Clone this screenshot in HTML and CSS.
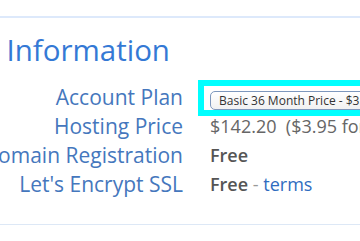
FILE: index.html
```html
<!DOCTYPE html>
<html lang="en">
<head>
    <meta charset="UTF-8">
    <title>Package Information</title>
    <link rel="stylesheet" href="styles.css">
</head>
<body>
    <div class="panel">
        <h2 class="panel-title">Package Information</h2>

        <div class="info-grid">
            <div class="info-label"><span>Account Plan</span></div>
            <div class="info-value">
                <span class="hilite">
                    <select class="plan-select">
                        <option>Basic 36 Month Price - $3.95/mo.</option>
                        <option>Basic 24 Month Price - $4.95/mo.</option>
                        <option>Basic 12 Month Price - $5.95/mo.</option>
                    </select>
                </span>
            </div>

            <div class="info-label"><span>Hosting Price</span></div>
            <div class="info-value">$142.20&nbsp; ($3.95 for 36 months)</div>

            <div class="info-label"><span>Domain Registration</span></div>
            <div class="info-value"><strong>Free</strong></div>

            <div class="info-label"><span>Let's Encrypt SSL</span></div>
            <div class="info-value"><strong>Free</strong> <span class="sep">-</span> <a href="#" class="terms">terms</a></div>
        </div>
    </div>
</body>
</html>
```

FILE: styles.css
```css
body {
    font-family: "Open Sans", "Liberation Sans", sans-serif;
    margin: 0;
    padding: 0;
    background-color: #fff;
    overflow: hidden;
}
.panel {
    margin-top: 16px;
    border-top: 2px solid #dde9fb;
    border-bottom: 1px solid #dde8f6;
    padding: 12px 0 25px;
}
.panel-title {
    margin: 0 0 13px -114px; /* the start of the title is cut off at the left */
    font-size: 29.5px;
    line-height: 40px;
    font-weight: normal;
    color: #3479d5;
    white-space: nowrap;
}

.info-grid {
    display: grid;
    grid-template-columns: 183px 1fr;
    column-gap: 27px;
    grid-auto-rows: 29px;
}
.info-label {
    display: flex;
    justify-content: flex-end; /* long labels run off to the left */
    white-space: nowrap;
    font-size: 21px;
    line-height: 29px;
    color: #4577bd;
}
.info-value {
    white-space: nowrap;
    font-size: 18px;
    line-height: 29px;
    color: #666;
}
.info-value strong {
    font-weight: 600;
    color: #555;
}
.sep {
    color: #999;
}
.terms {
    color: #2f6cc0;
    text-decoration: none;
}

/* cyan highlight round the plan select */
.hilite {
    display: inline-block;
    border: 6px solid #00ffff;
    padding: 5px 0 0 6px;
    margin: -3px 0 0 -12px;
    width: 200px;
    line-height: 0;
}
.plan-select {
    appearance: none;
    -webkit-appearance: none;
    height: 19px;
    width: 220px;
    padding: 0 8px;
    font-family: "Open Sans", "Liberation Sans", sans-serif;
    font-size: 12px;
    color: #333;
    border: 1px solid #7d97bd;
    border-radius: 5px;
    background: linear-gradient(#fff, #f1f1f1);
}
```
